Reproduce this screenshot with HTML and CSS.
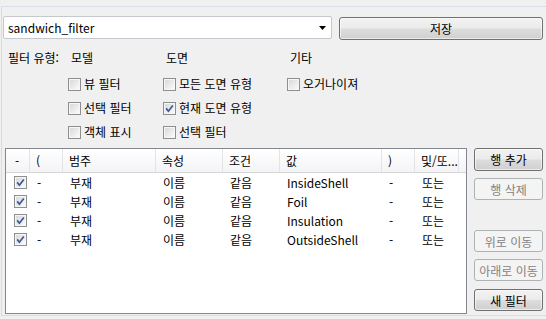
FILE: index.html
```html
<!DOCTYPE html>
<html lang="ko">
<head>
    <meta charset="UTF-8">
    <title>필터</title>
    <link rel="stylesheet" href="styles.css">
</head>
<body>
    <div class="frame">
        <!-- Filter name + save -->
        <div class="toolbar">
            <div class="combo">
                <span>sandwich_filter</span>
                <svg class="arrow" width="7" height="4" viewBox="0 0 7 4"><polygon points="0,0 7,0 3.5,4" fill="#000"/></svg>
            </div>
            <button class="btn save">저장</button>
        </div>

        <!-- Filter types -->
        <div class="types">
            <span class="type-label">필터 유형:</span>
            <span class="head">모델</span>
            <span class="head">도면</span>
            <span class="head">기타</span>

            <span></span>
            <label class="opt"><span class="cb"></span>뷰 필터</label>
            <label class="opt"><span class="cb"></span>모든 도면 유형</label>
            <label class="opt"><span class="cb"></span>오거나이져</label>

            <span></span>
            <label class="opt"><span class="cb"></span>선택 필터</label>
            <label class="opt"><span class="cb checked"><svg width="11" height="11" viewBox="0 0 11 11"><path d="M2.2 5.4 L4.4 8.2 L8.8 2.4" fill="none" stroke="#3b5796" stroke-width="1.7"/></svg></span>현재 도면 유형</label>
            <span></span>

            <span></span>
            <label class="opt"><span class="cb"></span>객체 표시</label>
            <label class="opt"><span class="cb"></span>선택 필터</label>
            <span></span>
        </div>

        <!-- Rules list + actions -->
        <div class="rules">
            <div class="list">
                <div class="list-head">
                    <span>-</span><span>(</span><span>범주</span><span>속성</span><span>조건</span><span>값</span><span>)</span><span>및/또...</span><span class="filler"></span>
                </div>
                <div class="list-row">
                    <span><span class="cb checked"><svg width="11" height="11" viewBox="0 0 11 11"><path d="M2.2 5.4 L4.4 8.2 L8.8 2.4" fill="none" stroke="#3b5796" stroke-width="1.7"/></svg></span></span>
                    <span>-</span><span>부재</span><span>이름</span><span>같음</span><span>InsideShell</span><span>-</span><span>또는</span><span></span>
                </div>
                <div class="list-row">
                    <span><span class="cb checked"><svg width="11" height="11" viewBox="0 0 11 11"><path d="M2.2 5.4 L4.4 8.2 L8.8 2.4" fill="none" stroke="#3b5796" stroke-width="1.7"/></svg></span></span>
                    <span>-</span><span>부재</span><span>이름</span><span>같음</span><span>Foil</span><span>-</span><span>또는</span><span></span>
                </div>
                <div class="list-row">
                    <span><span class="cb checked"><svg width="11" height="11" viewBox="0 0 11 11"><path d="M2.2 5.4 L4.4 8.2 L8.8 2.4" fill="none" stroke="#3b5796" stroke-width="1.7"/></svg></span></span>
                    <span>-</span><span>부재</span><span>이름</span><span>같음</span><span>Insulation</span><span>-</span><span>또는</span><span></span>
                </div>
                <div class="list-row">
                    <span><span class="cb checked"><svg width="11" height="11" viewBox="0 0 11 11"><path d="M2.2 5.4 L4.4 8.2 L8.8 2.4" fill="none" stroke="#3b5796" stroke-width="1.7"/></svg></span></span>
                    <span>-</span><span>부재</span><span>이름</span><span>같음</span><span>OutsideShell</span><span>-</span><span>또는</span><span></span>
                </div>
            </div>

            <div class="actions">
                <button class="btn add">행 추가</button>
                <button class="btn" disabled>행 삭제</button>
                <button class="btn move-up" disabled>위로 이동</button>
                <button class="btn" disabled>아래로 이동</button>
                <button class="btn new">새 필터</button>
            </div>
        </div>
    </div>
</body>
</html>
```

FILE: styles.css
```css
body {
    margin: 0;
    width: 546px;
    height: 319px;
    overflow: hidden;
    background-color: #f0f0f0;
    font-family: "Noto Sans CJK KR", "Noto Sans", sans-serif;
    font-size: 12px;
    color: #000;
}
.frame {
    box-sizing: border-box;
    height: 310px;
    margin: 6px 0 0 1px;
    border-top: 1px solid #dae0e7;
    border-left: 1px solid #dcdcdc;
    border-bottom: 1px solid #dcdcdc;
}

/* top bar */
.toolbar {
    display: flex;
    margin-top: 9px;
    padding: 0 3px 0 1px;
}
.combo {
    box-sizing: border-box;
    width: 329px;
    height: 23px;
    display: flex;
    align-items: center;
    justify-content: space-between;
    padding: 0 5px 0 4px;
    background-color: #fff;
    border: 1px solid #c5c9cf;
    border-radius: 2px;
    line-height: 16px;
}
.btn {
    box-sizing: border-box;
    height: 22px;
    padding: 0;
    border: 1px solid #707070;
    border-radius: 3px;
    background: linear-gradient(#f2f2f2, #ebebeb 48%, #dddddd 52%, #cfcfcf);
    box-shadow: inset 0 0 0 1px rgba(255, 255, 255, 0.6);
    font: inherit;
    color: #000;
}
.btn:disabled {
    border-color: #adb2b5;
    background: #f4f4f4;
    box-shadow: none;
    color: #838383;
}
.save {
    flex: 1;
    height: 23px;
    margin: 1px 0 0 7px;
}

/* filter type checkboxes */
.types {
    display: grid;
    grid-template-columns: 60px 95px 124px 1fr;
    grid-template-rows: 22px 24px 24px 24px;
    margin-top: 10px;
    padding-left: 6px;
    line-height: 16px;
}
.head {
    padding-left: 3px;
}
.opt {
    display: flex;
    align-items: center;
    gap: 3px;
}
.cb {
    box-sizing: border-box;
    width: 13px;
    height: 13px;
    flex: none;
    display: flex;
    align-items: center;
    justify-content: center;
    border: 1px solid #8e8f8f;
    background: linear-gradient(135deg, #d6d6d6, #fdfdfd);
    box-shadow: inset 0 0 0 1px #f6f6f6;
}

/* rule list */
.rules {
    display: flex;
    margin-top: 4px;
    padding: 0 3px;
}
.list {
    box-sizing: border-box;
    width: 462px;
    height: 166px;
    border: 1px solid #828790;
    background-color: #fff;
}
.list-head,
.list-row {
    display: grid;
    grid-template-columns: 24px 33px 93px 67px 57px 102px 33px 44px 1fr;
}
.list-head {
    height: 24px;
    line-height: 23px;
    box-sizing: border-box;
    border-bottom: 1px solid #d5d5d5;
    background: linear-gradient(#ffffff, #f3f4f6);
}
.list-head span {
    padding-left: 6px;
    border-right: 1px solid #e2e4e8;
    white-space: nowrap;
    overflow: hidden;
}
.list-head span:first-child {
    padding-left: 9px;
}
.list-head .filler {
    border-right: none;
}
.list-row {
    height: 19px;
    line-height: 19px;
}
.list-row > span {
    padding-left: 7px;
    white-space: nowrap;
}
.list-row > span:first-child {
    display: flex;
    align-items: center;
    padding-left: 8px;
}

/* right buttons */
.actions {
    flex: 1;
    display: flex;
    flex-direction: column;
    gap: 7px;
    margin-left: 7px;
}
.actions .add {
    height: 23px;
}
.actions .move-up {
    margin-top: 23px;
}
.actions .new {
    margin-top: 1px;
}
```
